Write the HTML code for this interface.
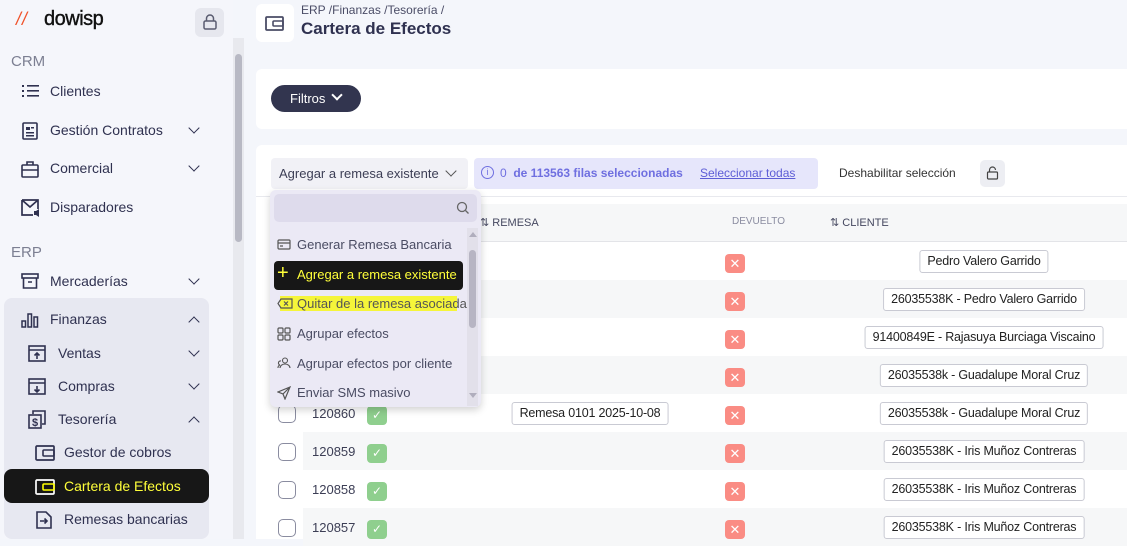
<!DOCTYPE html><html><head><meta charset="utf-8"><style>
*{box-sizing:border-box;margin:0;padding:0}
body{width:1127px;height:539px;overflow:hidden;font-family:"Liberation Sans",sans-serif;background:#f4f6fb;position:relative;color:#2f3150}
.a{position:absolute}
.side{left:0;top:0;width:233px;height:539px;background:#f5f6fb}
.sb{left:233px;top:38px;width:11px;height:501px;background:#e8e9ee}
.sbt{left:235px;top:54px;width:7px;height:188px;background:#b8b9c4;border-radius:4px}
.sec{font-size:15px;color:#7c7f92}
.it{font-size:14px;color:#2f3150;white-space:nowrap}
.chev{width:8px;height:8px;border-right:1.6px solid #2f3150;border-bottom:1.6px solid #2f3150;transform:rotate(45deg)}
.chevu{width:8px;height:8px;border-left:1.6px solid #2f3150;border-top:1.6px solid #2f3150;transform:rotate(45deg)}
.row{left:303px;width:824px;height:38px}
.g{background:#f6f7f8}
.cb{left:278px;width:18px;height:18px;border:1.3px solid #8a8ca0;border-radius:5px;background:#fff}
.num{left:312px;font-size:13px;color:#3c3e55}
.ok{left:367px;width:20px;height:19px;background:#8fcf8e;border-radius:4px;color:#fff;font-size:12px;text-align:center;line-height:19px}
.x{left:725px;width:20px;height:19px;background:#fa8c84;border-radius:4px;color:#fff;font-size:13px;text-align:center;line-height:19px}
.tag{height:23px;border:1px solid #c9cad3;border-radius:3px;background:#fff;font-size:12.5px;letter-spacing:-0.2px;line-height:21px;padding:0 7px;color:#222;white-space:nowrap;transform:translateX(-50%)}
.mi{left:278px;font-size:13px;color:#4a4c63;white-space:nowrap}
</style></head><body>
<div class="a side"></div>
<div class="a" style="left:16px;top:9px;font-size:18px;color:#f0522a;font-style:italic;letter-spacing:1px">//</div>
<div class="a" style="left:44px;top:8px;font-size:20px;color:#111;letter-spacing:-0.5px;-webkit-text-stroke:0.4px #111">dowisp</div>
<div class="a" style="left:195px;top:8px;width:29px;height:29px;background:#e6e7ee;border-radius:6px"></div>
<svg class="a" style="left:202px;top:13px" width="16" height="18" viewBox="0 0 16 18"><rect x="2" y="8" width="12" height="8" rx="1.5" fill="none" stroke="#5a5c70" stroke-width="1.5"/><path d="M4.5 8V5.5a3.5 3.5 0 0 1 7 0V8" fill="none" stroke="#5a5c70" stroke-width="1.5"/></svg>
<div class="a sb"></div><div class="a sbt"></div>
<div class="a sec" style="left:11px;top:53px">CRM</div>
<svg class="a" style="left:22px;top:84px" width="17" height="15"><g fill="#2f3150"><rect x="0" y="1" width="2" height="2"/><rect x="0" y="6" width="2" height="2"/><rect x="0" y="11" width="2" height="2"/><rect x="5" y="1" width="12" height="1.6"/><rect x="5" y="6" width="12" height="1.6"/><rect x="5" y="11" width="12" height="1.6"/></g></svg>
<div class="a it" style="left:50px;top:83px">Clientes</div>
<svg class="a" style="left:22px;top:122px" width="16" height="18"><rect x="1" y="1" width="14" height="16" rx="1" fill="none" stroke="#2f3150" stroke-width="1.6"/><rect x="4" y="5" width="4" height="3" fill="#2f3150"/><rect x="9" y="5" width="3" height="1.5" fill="#2f3150"/><rect x="4" y="10" width="8" height="1.5" fill="#2f3150"/><rect x="4" y="13" width="8" height="1.5" fill="#2f3150"/></svg>
<div class="a it" style="left:50px;top:122px">Gestión Contratos</div>
<div class="a chev" style="left:190px;top:124px"></div>
<svg class="a" style="left:21px;top:160px" width="18" height="18"><rect x="1" y="5" width="16" height="12" rx="1" fill="none" stroke="#2f3150" stroke-width="1.6"/><path d="M6 5V2h6v3M1 10h16" fill="none" stroke="#2f3150" stroke-width="1.6"/></svg>
<div class="a it" style="left:50px;top:160px">Comercial</div>
<div class="a chev" style="left:190px;top:162px"></div>
<svg class="a" style="left:21px;top:199px" width="20" height="18"><path d="M1 1h16v9M1 1v15h11M1 1l8 7 8-7" fill="none" stroke="#2f3150" stroke-width="1.7"/><path d="M13 12h2l3-2v8l-3-2h-2z" fill="#2f3150"/></svg>
<div class="a it" style="left:50px;top:199px">Disparadores</div>
<div class="a sec" style="left:11px;top:244px">ERP</div>
<svg class="a" style="left:21px;top:273px" width="18" height="16"><rect x="1" y="1" width="16" height="4" fill="none" stroke="#2f3150" stroke-width="1.6"/><path d="M2.5 5v10h13V5M7 9h4" fill="none" stroke="#2f3150" stroke-width="1.6"/></svg>
<div class="a it" style="left:50px;top:273px">Mercaderías</div>
<div class="a chev" style="left:190px;top:275px"></div>
<div class="a" style="left:4px;top:298px;width:205px;height:241px;background:#e7e8f1;border-radius:8px"></div>
<svg class="a" style="left:21px;top:312px" width="18" height="16"><g fill="none" stroke="#2f3150" stroke-width="1.5"><rect x="1" y="9" width="3.5" height="6"/><rect x="7" y="2" width="3.5" height="13"/><rect x="13" y="5" width="3.5" height="10"/></g></svg>
<div class="a it" style="left:50px;top:311px">Finanzas</div>
<div class="a chevu" style="left:190px;top:318px"></div>
<svg class="a" style="left:28px;top:345px" width="18" height="17"><rect x="1" y="1" width="16" height="15" fill="none" stroke="#2f3150" stroke-width="1.6"/><path d="M1 5h16M9 14V8M6.5 10.5 9 8l2.5 2.5" fill="none" stroke="#2f3150" stroke-width="1.6"/></svg>
<div class="a it" style="left:58px;top:345px">Ventas</div>
<div class="a chev" style="left:190px;top:347px"></div>
<svg class="a" style="left:28px;top:378px" width="18" height="17"><rect x="1" y="1" width="16" height="15" fill="none" stroke="#2f3150" stroke-width="1.6"/><path d="M1 5h16M9 8v6M6.5 11.5 9 14l2.5-2.5" fill="none" stroke="#2f3150" stroke-width="1.6"/></svg>
<div class="a it" style="left:58px;top:378px">Compras</div>
<div class="a chev" style="left:190px;top:380px"></div>
<svg class="a" style="left:28px;top:410px" width="18" height="19"><path d="M5 4V1h12v13h-3" fill="none" stroke="#2f3150" stroke-width="1.6"/><rect x="1" y="5" width="12" height="13" fill="none" stroke="#2f3150" stroke-width="1.6"/><text x="4" y="16" font-size="11" font-family="Liberation Sans" font-weight="bold" fill="#2f3150">$</text></svg>
<div class="a it" style="left:58px;top:411px">Tesorería</div>
<div class="a chevu" style="left:190px;top:418px"></div>
<svg class="a" style="left:35px;top:444px" width="20" height="17"><rect x="1" y="2" width="18" height="14" rx="1" fill="none" stroke="#2f3150" stroke-width="1.7"/><rect x="8" y="6" width="11" height="6" rx="1" fill="none" stroke="#2f3150" stroke-width="1.6"/></svg>
<div class="a it" style="left:64px;top:444px">Gestor de cobros</div>
<div class="a" style="left:4px;top:469px;width:205px;height:34px;background:#171717;border-radius:8px"></div>
<svg class="a" style="left:35px;top:478px" width="20" height="17"><rect x="1" y="2" width="18" height="14" rx="1" fill="none" stroke="#fff" stroke-width="1.7"/><rect x="8" y="6" width="11" height="6" rx="1" fill="none" stroke="#ff0" stroke-width="1.6"/></svg>
<div class="a it" style="left:64px;top:478px;color:#ffff3a">Cartera de Efectos</div>
<svg class="a" style="left:36px;top:511px" width="16" height="18"><path d="M1 1h9l5 5v11H1z" fill="none" stroke="#2f3150" stroke-width="1.6"/><path d="M4 10h7M8.5 7.5 11 10l-2.5 2.5" fill="none" stroke="#2f3150" stroke-width="1.6"/></svg>
<div class="a it" style="left:64px;top:511px">Remesas bancarias</div>

<div class="a" style="left:256px;top:4px;width:38px;height:38px;background:#fff;border-radius:6px"></div>
<svg class="a" style="left:265px;top:15px" width="20" height="17"><rect x="1" y="2" width="17" height="13" rx="1" fill="none" stroke="#4a4c66" stroke-width="1.8"/><rect x="8" y="6" width="10" height="5" rx="1" fill="none" stroke="#4a4c66" stroke-width="1.6"/></svg>
<div class="a" style="left:301px;top:3px;font-size:12px;color:#4a4c66">ERP /Finanzas /Tesorería /</div>
<div class="a" style="left:301px;top:19px;font-size:17px;font-weight:bold;color:#2f3150">Cartera de Efectos</div>
<div class="a" style="left:256px;top:69px;width:871px;height:60px;background:#fff;border-radius:6px 0 0 6px"></div>
<div class="a" style="left:271px;top:85px;width:90px;height:27px;background:#32354f;border-radius:14px;color:#fff;font-size:13px;line-height:27px;padding-left:19px">Filtros</div>
<div class="a" style="left:333px;top:91px;width:8px;height:8px;border-right:2px solid #fff;border-bottom:2px solid #fff;transform:rotate(45deg)"></div>
<div class="a" style="left:256px;top:145px;width:871px;height:394px;background:#fff;border-radius:6px 0 0 0"></div>
<div class="a" style="left:271px;top:158px;width:197px;height:31px;background:#f1f1f6;border-radius:4px;font-size:13px;line-height:31px;padding-left:8px;color:#3c3e55">Agregar a remesa existente</div>
<div class="a chev" style="left:447px;top:167px;border-color:#555"></div>
<div class="a" style="left:474px;top:158px;width:344px;height:31px;background:#e6e6fb;border-radius:4px"></div>
<div class="a" style="left:481px;top:166px;width:13px;height:13px;border:1.2px solid #6f6fe0;border-radius:50%;font-size:9px;color:#6f6fe0;text-align:center;line-height:11px">i</div>
<div class="a" style="left:500px;top:166px;font-size:12px;color:#6f6fe0">0 &nbsp;<b>de 113563 filas seleccionadas</b></div>
<div class="a" style="left:700px;top:166px;font-size:12px;color:#5d5dd6;text-decoration:underline">Seleccionar todas</div>
<div class="a" style="left:839px;top:166px;font-size:12px;color:#333">Deshabilitar selección</div>
<div class="a" style="left:980px;top:160px;width:25px;height:27px;background:#edeef3;border-radius:5px"></div>
<svg class="a" style="left:986px;top:166px" width="13" height="14"><rect x="1.5" y="6" width="10" height="7" rx="1" fill="none" stroke="#444" stroke-width="1.2"/><path d="M3.5 6V4a3 3 0 0 1 6 0" fill="none" stroke="#444" stroke-width="1.2"/></svg>
<div class="a" style="left:256px;top:196px;width:871px;height:1px;background:#e8e9ee"></div>
<div class="a" style="left:303px;top:204px;width:824px;height:38px;background:#f6f7f8;border-bottom:1px solid #e3e4e8"></div>
<div class="a" style="left:480px;top:216px;font-size:11px;color:#454860">⇅ REMESA</div>
<div class="a" style="left:732px;top:216px;font-size:10px;color:#8a8ca0">DEVUELTO</div>
<div class="a" style="left:830px;top:216px;font-size:11px;color:#454860">⇅ CLIENTE</div>

<div class="a row g" style="top:280px"></div><div class="a row g" style="top:356px"></div><div class="a row g" style="top:432px"></div><div class="a row g" style="top:508px"></div>

<div class="a x" style="top:254px">✕</div><div class="a x" style="top:292px">✕</div><div class="a x" style="top:330px">✕</div><div class="a x" style="top:368px">✕</div><div class="a x" style="top:406px">✕</div><div class="a x" style="top:444px">✕</div><div class="a x" style="top:482px">✕</div><div class="a x" style="top:520px">✕</div>

<div class="a tag" style="left:984px;top:250px">Pedro Valero Garrido</div>
<div class="a tag" style="left:984px;top:288px">26035538K - Pedro Valero Garrido</div>
<div class="a tag" style="left:984px;top:326px">91400849E - Rajasuya Burciaga Viscaino</div>
<div class="a tag" style="left:984px;top:364px">26035538k - Guadalupe Moral Cruz</div>
<div class="a tag" style="left:984px;top:402px">26035538k - Guadalupe Moral Cruz</div>
<div class="a tag" style="left:984px;top:440px">26035538K - Iris Muñoz Contreras</div>
<div class="a tag" style="left:984px;top:478px">26035538K - Iris Muñoz Contreras</div>
<div class="a tag" style="left:984px;top:516px">26035538K - Iris Muñoz Contreras</div>
<div class="a tag" style="left:590px;top:402px">Remesa 0101 2025-10-08</div>

<div class="a cb" style="top:405px"></div><div class="a cb" style="top:443px"></div><div class="a cb" style="top:481px"></div><div class="a cb" style="top:519px"></div>
<div class="a num" style="top:406px">120860</div><div class="a num" style="top:444px">120859</div><div class="a num" style="top:482px">120858</div><div class="a num" style="top:520px">120857</div>
<div class="a ok" style="top:406px">✓</div><div class="a ok" style="top:444px">✓</div><div class="a ok" style="top:482px">✓</div><div class="a ok" style="top:520px">✓</div>

<div class="a" style="left:270px;top:190px;width:211px;height:217px;background:#ebe9f5;border-radius:6px;box-shadow:0 3px 8px rgba(0,0,0,.18)"></div>
<div class="a" style="left:274px;top:194px;width:203px;height:28px;background:#dedbec;border-radius:5px"></div>
<svg class="a" style="left:456px;top:201px" width="14" height="14"><circle cx="6" cy="6" r="4.5" fill="none" stroke="#666" stroke-width="1.3"/><path d="M9.5 9.5l3 3" stroke="#666" stroke-width="1.3"/></svg>
<div class="a" style="left:467px;top:228px;width:11px;height:178px;background:#e2e0ea"></div>
<div class="a" style="left:469px;top:250px;width:7px;height:78px;background:#b7b5c3;border-radius:4px"></div>
<div class="a" style="left:469px;top:232px;width:0;height:0;border:4px solid transparent;border-bottom:5px solid #b0aebd;border-top:0"></div>
<div class="a" style="left:469px;top:393px;width:0;height:0;border:4px solid transparent;border-top:5px solid #b0aebd;border-bottom:0"></div>
<svg class="a" style="left:277px;top:239px" width="14" height="11"><rect x="1" y="1" width="12" height="9" rx="1" fill="none" stroke="#555" stroke-width="1.2"/><path d="M1 4h12M3 7h3" stroke="#555" stroke-width="1.2"/></svg>
<div class="a mi" style="left:297px;top:237px">Generar Remesa Bancaria</div>
<div class="a" style="left:274px;top:261px;width:189px;height:29px;background:#171717;border-radius:4px"></div>
<div class="a" style="left:277px;top:262px;font-size:20px;color:#ffff3a">+</div>
<div class="a mi" style="left:297px;top:267px;color:#ffff3a">Agregar a remesa existente</div>
<div class="a" style="left:280px;top:296px;width:177px;height:15px;background:#f5f53a"></div>
<svg class="a" style="left:277px;top:298px" width="16" height="11"><path d="M4 1h11v9H4L1 5.5z" fill="none" stroke="#555" stroke-width="1.2"/><path d="M7 3.5l4 4M11 3.5l-4 4" stroke="#555" stroke-width="1.2"/></svg>
<div class="a mi" style="left:297px;top:296px;color:#555">Quitar de la remesa asociada</div>
<svg class="a" style="left:277px;top:327px" width="14" height="14" fill="none" stroke="#555" stroke-width="1.2"><rect x="1" y="1" width="5" height="5" rx="1"/><rect x="8" y="1" width="5" height="5" rx="1"/><rect x="1" y="8" width="5" height="5" rx="1"/><rect x="8" y="8" width="5" height="5" rx="1"/></svg>
<div class="a mi" style="left:297px;top:326px">Agrupar efectos</div>
<svg class="a" style="left:277px;top:357px" width="15" height="12" fill="none" stroke="#555" stroke-width="1.1"><circle cx="8" cy="3.5" r="2.5"/><path d="M3 11a5 4 0 0 1 10 0M4 4a2 2 0 0 0-1 4M1 11a3 3 0 0 1 2-3"/></svg>
<div class="a mi" style="left:297px;top:356px">Agrupar efectos por cliente</div>
<svg class="a" style="left:277px;top:386px" width="14" height="14" fill="none" stroke="#555" stroke-width="1.2"><path d="M13 1 1 6l5 2 2 5zM6 8l7-7"/></svg>
<div class="a mi" style="left:297px;top:385px">Enviar SMS masivo</div>
</body></html>
